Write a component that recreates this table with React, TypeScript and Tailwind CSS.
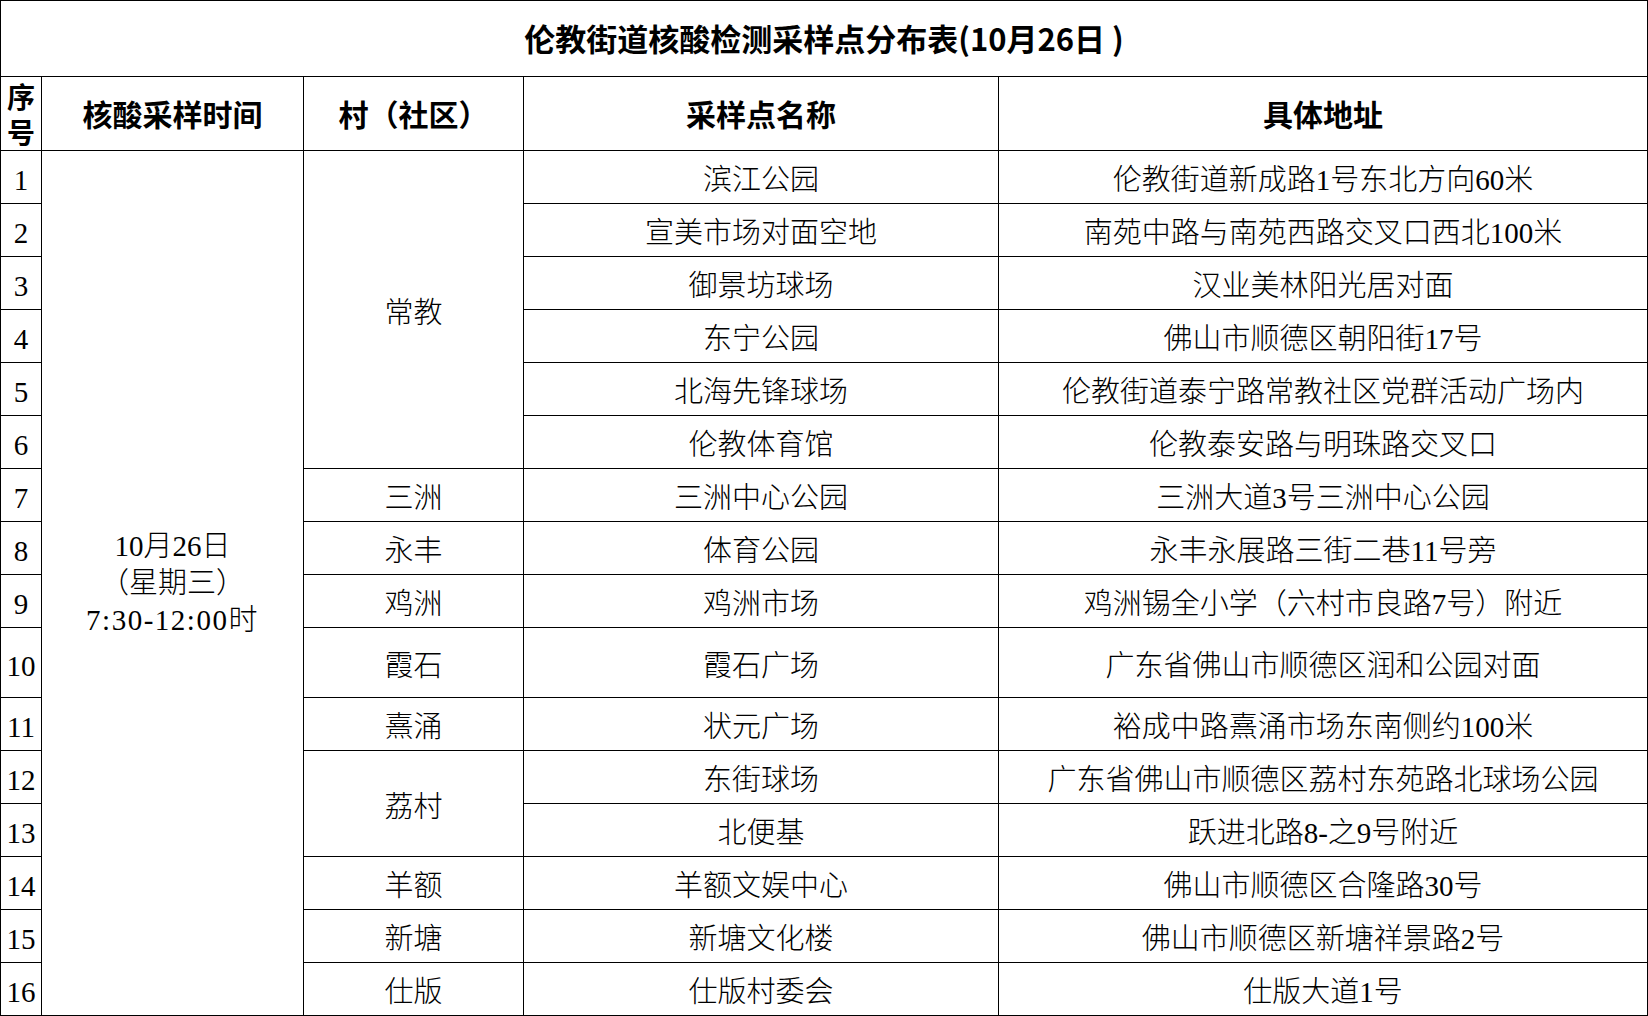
import React from 'react';

type Row = { no: number; village?: string; span?: number; site: string; addr: string; tall?: boolean };

const rows: Row[] = [
  { no: 1, village: '常教', span: 6, site: '滨江公园', addr: '伦教街道新成路1号东北方向60米' },
  { no: 2, site: '宣美市场对面空地', addr: '南苑中路与南苑西路交叉口西北100米' },
  { no: 3, site: '御景坊球场', addr: '汉业美林阳光居对面' },
  { no: 4, site: '东宁公园', addr: '佛山市顺德区朝阳街17号' },
  { no: 5, site: '北海先锋球场', addr: '伦教街道泰宁路常教社区党群活动广场内' },
  { no: 6, site: '伦教体育馆', addr: '伦教泰安路与明珠路交叉口' },
  { no: 7, village: '三洲', site: '三洲中心公园', addr: '三洲大道3号三洲中心公园' },
  { no: 8, village: '永丰', site: '体育公园', addr: '永丰永展路三街二巷11号旁' },
  { no: 9, village: '鸡洲', site: '鸡洲市场', addr: '鸡洲锡全小学（六村市良路7号）附近' },
  { no: 10, village: '霞石', site: '霞石广场', addr: '广东省佛山市顺德区润和公园对面', tall: true },
  { no: 11, village: '熹涌', site: '状元广场', addr: '裕成中路熹涌市场东南侧约100米' },
  { no: 12, village: '荔村', span: 2, site: '东街球场', addr: '广东省佛山市顺德区荔村东苑路北球场公园' },
  { no: 13, site: '北便基', addr: '跃进北路8-之9号附近' },
  { no: 14, village: '羊额', site: '羊额文娱中心', addr: '佛山市顺德区合隆路30号' },
  { no: 15, village: '新塘', site: '新塘文化楼', addr: '佛山市顺德区新塘祥景路2号' },
  { no: 16, village: '仕版', site: '仕版村委会', addr: '仕版大道1号' },
];

const serif = "font-['Liberation_Serif','Noto_Sans_CJK_SC',serif] font-light";
const sans = "font-['Noto_Sans_CJK_SC','Liberation_Sans',sans-serif]";
const cell = 'border border-black text-center align-middle p-0';
const body = `${cell} pt-[8px]`;

export default function App() {
  return (
    <div className="w-[1648px] h-[1016px] bg-white text-black overflow-hidden">
      <table className="table-fixed border-collapse w-[1647px]">
        <colgroup>
          <col className="w-[41px]" />
          <col className="w-[262px]" />
          <col className="w-[220px]" />
          <col className="w-[475px]" />
          <col className="w-[649px]" />
        </colgroup>
        <tbody>
          <tr className="h-[76px]">
            <td colSpan={5} className={`${cell} ${sans} text-[31px] font-bold`}>
              伦教街道核酸检测采样点分布表(10月26日 )
            </td>
          </tr>
          <tr className={`h-[74px] ${sans} font-bold`}>
            <td className={`${cell} text-[28px]`}>
              <div className="leading-[36px]">序</div>
              <div className="leading-[36px]">号</div>
            </td>
            <td className={`${cell} text-[30px]`}>核酸采样时间</td>
            <td className={`${cell} text-[30px]`}>村（社区）</td>
            <td className={`${cell} text-[30px]`}>采样点名称</td>
            <td className={`${cell} text-[30px]`}>具体地址</td>
          </tr>
          {rows.map((r) => (
            <tr key={r.no} className={`${r.tall ? 'h-[70px]' : 'h-[53px]'} ${serif} text-[29px]`}>
              <td className={body}>{r.no}</td>
              {r.no === 1 && (
                <td rowSpan={16} className={`${cell} leading-[37px]`}>
                  <div>10月26日</div>
                  <div>（星期三）</div>
                  <div className="tracking-[1.5px]">7:30-12:00时</div>
                </td>
              )}
              {r.village && (
                <td rowSpan={r.span ?? 1} className={body}>
                  {r.village}
                </td>
              )}
              <td className={body}>{r.site}</td>
              <td className={body}>{r.addr}</td>
            </tr>
          ))}
        </tbody>
      </table>
    </div>
  );
}
